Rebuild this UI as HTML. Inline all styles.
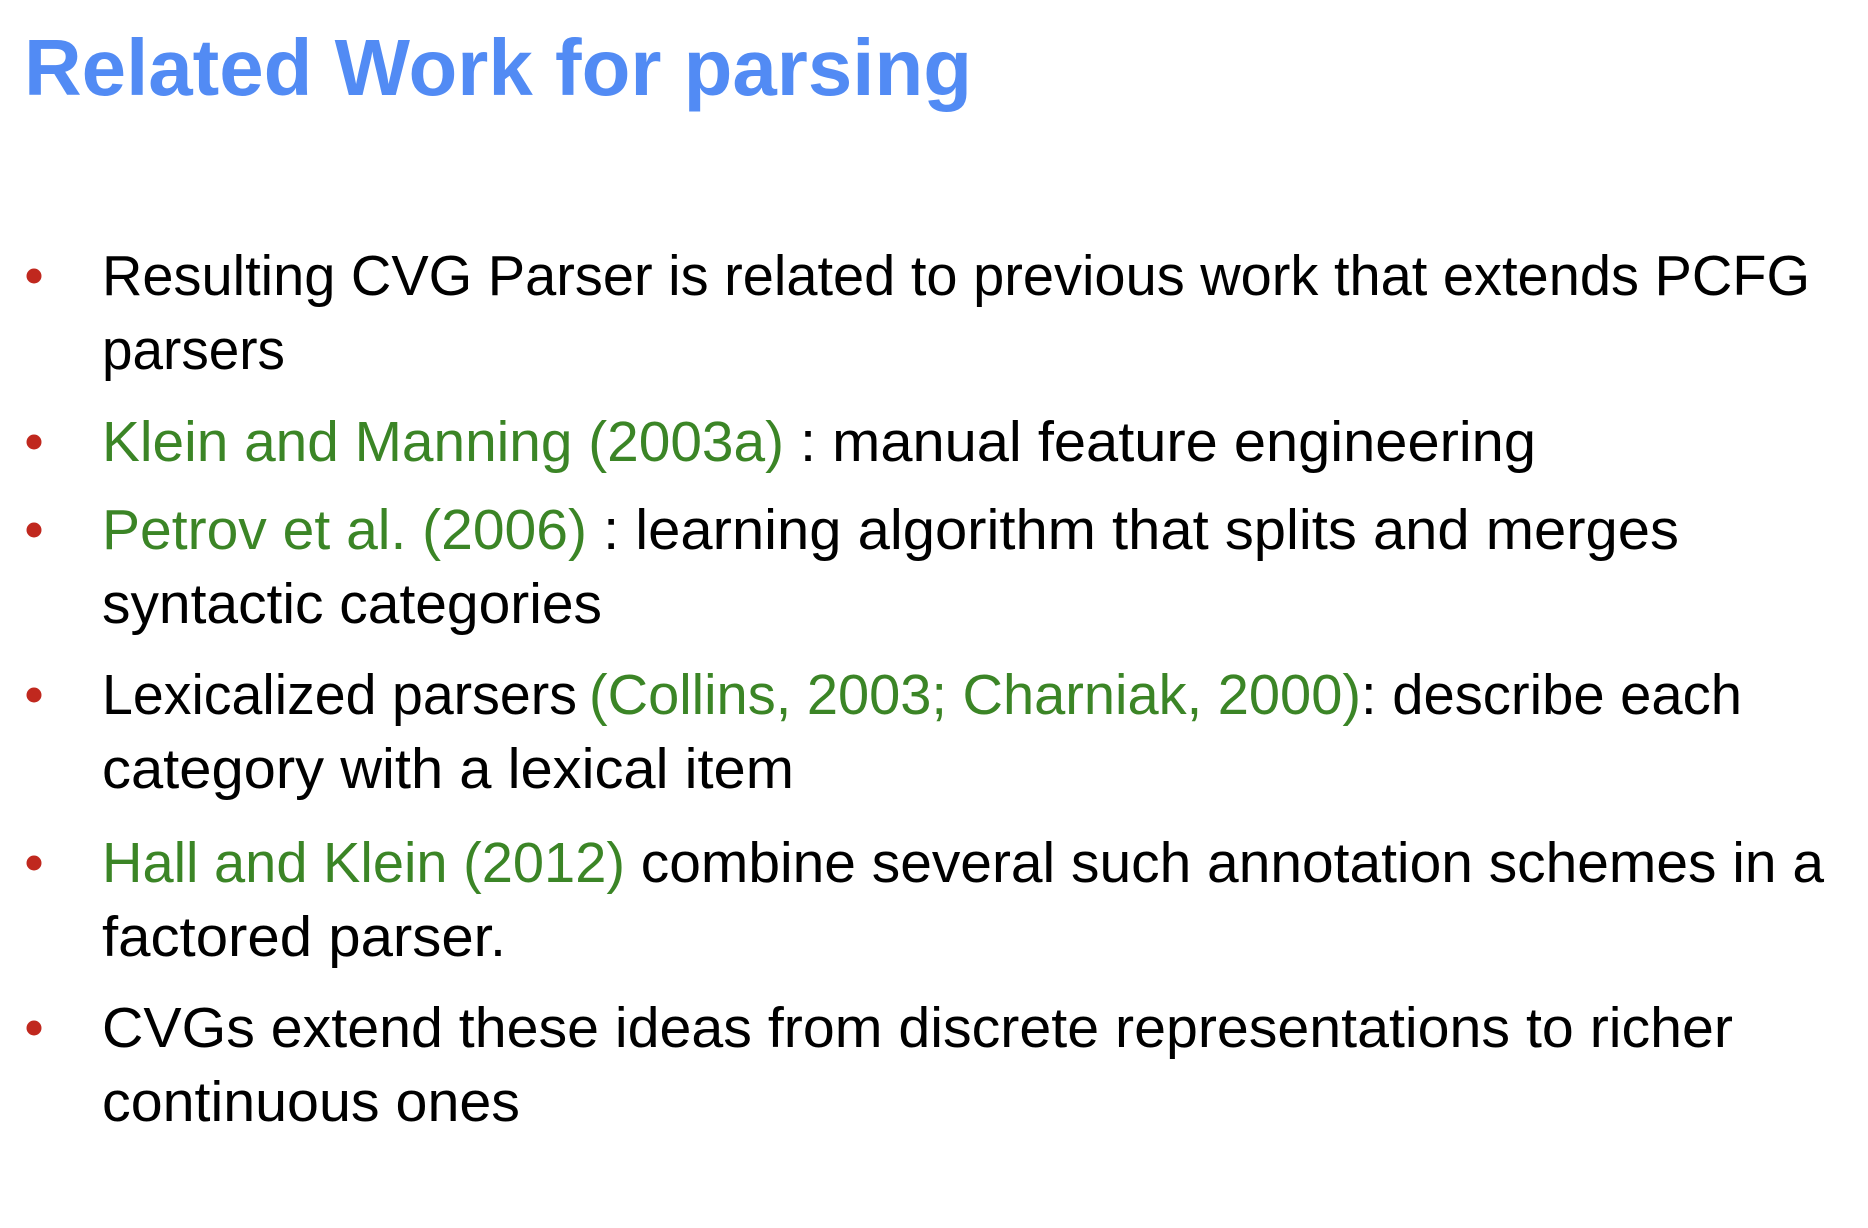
<!DOCTYPE html>
<html><head><meta charset="utf-8"><style>
html,body{margin:0;padding:0;background:#fff;width:1868px;height:1228px;overflow:hidden}
svg{display:block}
text{font-family:"Liberation Sans",sans-serif;font-size:57px;fill:#000}
.g{fill:#3B8526}
.t{font-size:80px;font-weight:bold;fill:#528BF4}
</style></head><body>
<svg width="1868" height="1228" viewBox="0 0 1868 1228" xmlns="http://www.w3.org/2000/svg">
<text class="t" x="24" y="95" textLength="948" lengthAdjust="spacingAndGlyphs">Related Work for parsing</text>
<g fill="#C0281E">
<circle cx="34" cy="276" r="7.5"/>
<circle cx="34" cy="442" r="7.5"/>
<circle cx="34" cy="530" r="7.5"/>
<circle cx="34" cy="695" r="7.5"/>
<circle cx="34" cy="863" r="7.5"/>
<circle cx="34" cy="1028" r="7.5"/>
</g>
<text x="102" y="295" textLength="1708" lengthAdjust="spacingAndGlyphs">Resulting CVG Parser is related to previous work that extends PCFG</text>
<text x="102" y="369" textLength="183" lengthAdjust="spacingAndGlyphs">parsers</text>

<text class="g" x="102" y="461" textLength="682" lengthAdjust="spacingAndGlyphs">Klein and Manning (2003a)</text>
<text x="784" y="461" textLength="752" lengthAdjust="spacingAndGlyphs">&#160;: manual feature engineering</text>

<text class="g" x="102" y="549" textLength="485" lengthAdjust="spacingAndGlyphs">Petrov et al. (2006)</text>
<text x="587" y="549" textLength="1092" lengthAdjust="spacingAndGlyphs">&#160;: learning algorithm that splits and merges</text>
<text x="102" y="623" textLength="500" lengthAdjust="spacingAndGlyphs">syntactic categories</text>

<text x="102" y="714" textLength="475" lengthAdjust="spacingAndGlyphs">Lexicalized parsers</text>
<text class="g" x="589" y="714" textLength="772" lengthAdjust="spacingAndGlyphs">(Collins, 2003; Charniak, 2000)</text>
<text x="1361" y="714" textLength="381" lengthAdjust="spacingAndGlyphs">: describe each</text>
<text x="102" y="788" textLength="692" lengthAdjust="spacingAndGlyphs">category with a lexical item</text>

<text class="g" x="102" y="882" textLength="523" lengthAdjust="spacingAndGlyphs">Hall and Klein (2012)</text>
<text x="625" y="882" textLength="1199" lengthAdjust="spacingAndGlyphs">&#160;combine several such annotation schemes in a</text>
<text x="102" y="956" textLength="404" lengthAdjust="spacingAndGlyphs">factored parser.</text>

<text x="102" y="1047" textLength="1631" lengthAdjust="spacingAndGlyphs">CVGs extend these ideas from discrete representations to richer</text>
<text x="102" y="1121" textLength="418" lengthAdjust="spacingAndGlyphs">continuous ones</text>
</svg>
</body></html>
